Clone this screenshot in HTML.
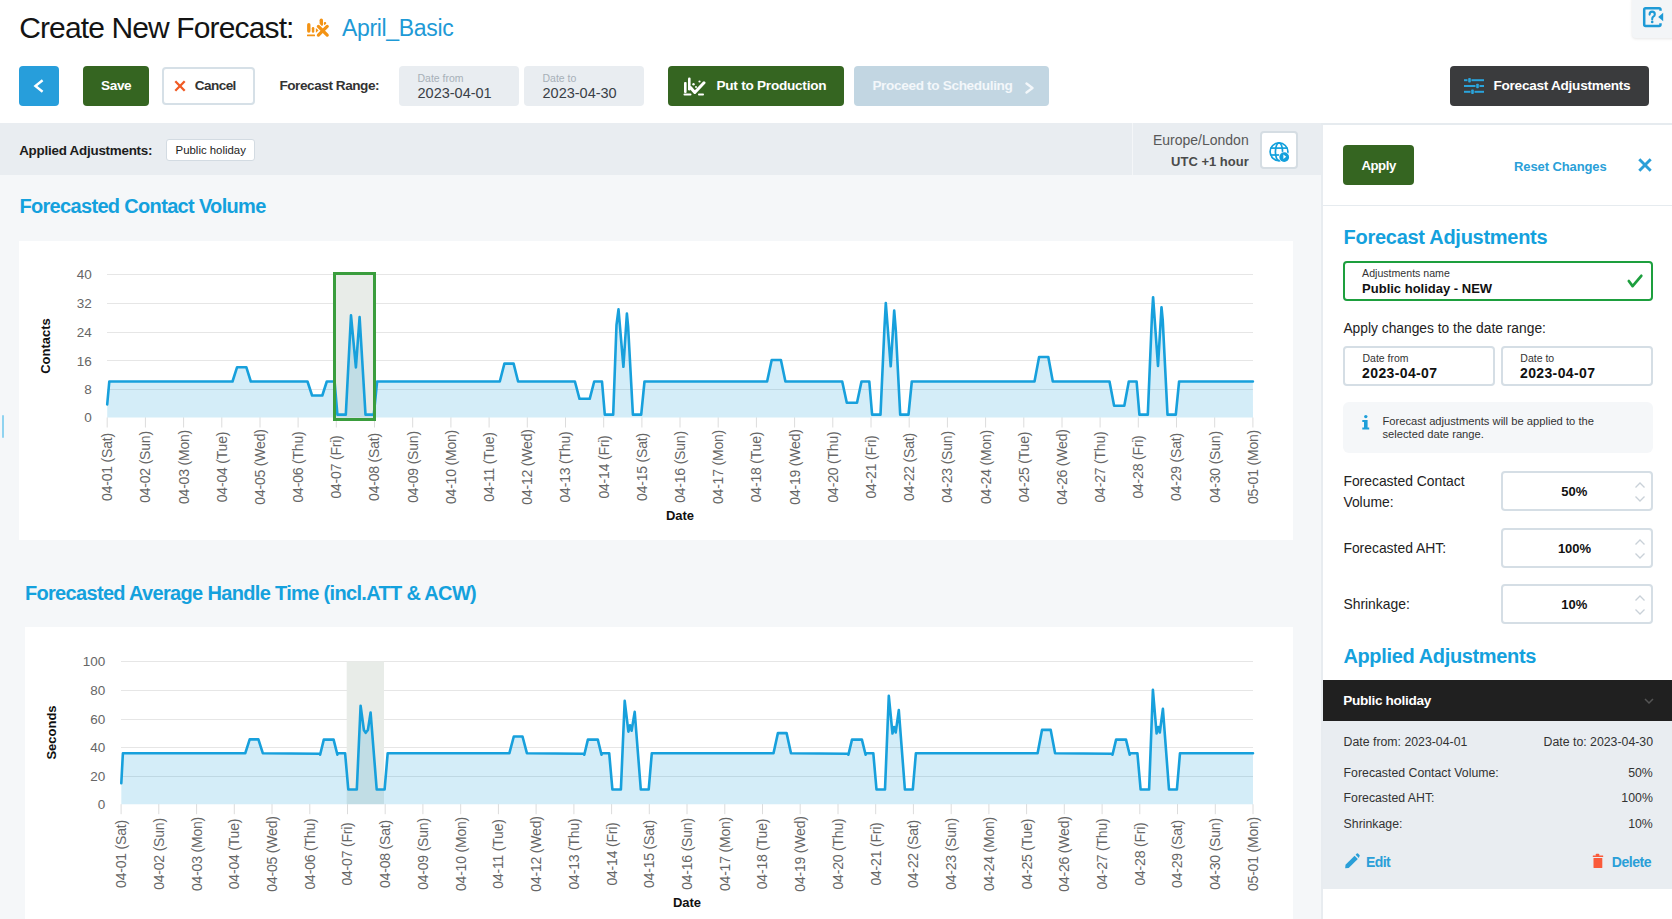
<!DOCTYPE html>
<html><head><meta charset="utf-8"><title>Create New Forecast</title>
<style>
html,body{margin:0;padding:0;}
body{width:1672px;height:919px;overflow:hidden;position:relative;background:#fff;font-family:"Liberation Sans", sans-serif;}
.t{position:absolute;white-space:nowrap;font-family:"Liberation Sans", sans-serif;}
.r{position:absolute;}
svg text{font-family:"Liberation Sans", sans-serif;}
</style></head><body>
<div class="t" style="top:12.50px;font-size:30px;line-height:30px;font-weight:400;color:#141414;letter-spacing:-0.87px;left:19.20px;">Create New Forecast:</div>
<svg class="r" style="left:302px;top:14px;width:32px;height:26px" viewBox="0 0 32 26">
<g fill="#f39314">
<rect x="5.1" y="9.1" width="3.4" height="9.6" rx="1.7"/>
<rect x="9.8" y="13" width="2.5" height="5.7" rx="1.2"/>
<polygon points="13.9,13.9 16.7,16.3 13.9,18.7"/>
<rect x="5" y="20.4" width="8" height="1.8" rx="0.5"/>
<rect x="17.6" y="4.5" width="3.4" height="7.6" rx="1.7"/>
<rect x="21.8" y="7.9" width="2.4" height="3" rx="1"/>
</g>
<g stroke="#fff" stroke-width="5.4" stroke-linecap="round">
<line x1="16.4" y1="12.4" x2="25.2" y2="21.1"/><line x1="25.2" y1="12.4" x2="16.4" y2="21.1"/>
</g>
<g stroke="#f39314" stroke-width="3.3" stroke-linecap="round">
<line x1="16.4" y1="12.4" x2="25.2" y2="21.1"/><line x1="25.2" y1="12.4" x2="16.4" y2="21.1"/>
</g>
</svg>
<div class="t" style="top:17.13px;font-size:23px;line-height:23px;font-weight:400;color:#1e9ad6;letter-spacing:-0.33px;left:342.00px;">April_Basic</div>
<div class="r" style="left:1632.00px;top:-4.00px;width:44.00px;height:42.00px;background:#f3f5f7;border-radius:4px;box-sizing:border-box;box-shadow:0 1px 3px rgba(0,0,0,0.10);"></div>
<svg class="r" style="left:1642px;top:6px;width:22px;height:22px" viewBox="0 0 22 22">
<path d="M18.5 4.8 V3.6 Q18.5 2.2 17.1 2.2 H3.6 Q2.2 2.2 2.2 3.6 V18.6 Q2.2 20 3.6 20 H17.1 Q18.5 20 18.5 18.6 V17.2" fill="none" stroke="#1e9ad6" stroke-width="2.5"/>
<path d="M21.2 6.8 L16.2 11 L21.2 15.2 Z" fill="#1e9ad6"/>
<path d="M7.6 8.6 Q7.6 5.6 10.2 5.6 Q12.8 5.6 12.8 8.2 Q12.8 9.8 11.3 10.7 Q10.2 11.4 10.2 13.2" fill="none" stroke="#1e9ad6" stroke-width="2.1" stroke-linecap="round"/>
<circle cx="10.2" cy="15.9" r="1.3" fill="#1e9ad6"/>
</svg>
<div class="r" style="left:19.00px;top:66.00px;width:40.00px;height:40.00px;background:#279edb;border-radius:4px;box-sizing:border-box;"></div>
<svg class="r" style="left:19px;top:66px;width:40px;height:40px" viewBox="0 0 40 40"><polyline points="23.6,14.2 16.4,20 23.6,25.8" fill="none" stroke="#fff" stroke-width="2.4" stroke-linecap="butt" stroke-linejoin="miter"/></svg>
<div class="r" style="left:83.00px;top:66.00px;width:66.00px;height:40.00px;background:#356521;border-radius:4px;box-sizing:border-box;"></div>
<div class="t" style="top:79.39px;font-size:13.6px;line-height:13.6px;font-weight:700;color:#fff;letter-spacing:-0.4px;left:101.10px;">Save</div>
<div class="r" style="left:161.50px;top:66.50px;width:93.00px;height:38.50px;background:#fff;border-radius:4px;box-sizing:border-box;border:2px solid #d6e0e7;"></div>
<svg class="r" style="left:174px;top:80px;width:12px;height:12px" viewBox="0 0 12 12"><g stroke="#f05a24" stroke-width="2.3" stroke-linecap="butt"><line x1="1.3" y1="1.3" x2="10.7" y2="10.7"/><line x1="10.7" y1="1.3" x2="1.3" y2="10.7"/></g></svg>
<div class="t" style="top:79.39px;font-size:13.6px;line-height:13.6px;font-weight:700;color:#333;letter-spacing:-0.6px;left:194.80px;">Cancel</div>
<div class="t" style="top:79.39px;font-size:13.6px;line-height:13.6px;font-weight:700;color:#333;letter-spacing:-0.45px;left:279.40px;">Forecast Range:</div>
<div class="r" style="left:399.00px;top:66.00px;width:120.00px;height:40.00px;background:#e9edf1;border-radius:4px;box-sizing:border-box;"></div>
<div class="t" style="top:72.71px;font-size:10.5px;line-height:10.5px;font-weight:400;color:#a7b0b8;left:417.50px;">Date from</div>
<div class="t" style="top:85.53px;font-size:14.5px;line-height:14.5px;font-weight:400;color:#3a4047;left:417.50px;">2023-04-01</div>
<div class="r" style="left:524.00px;top:66.00px;width:120.00px;height:40.00px;background:#e9edf1;border-radius:4px;box-sizing:border-box;"></div>
<div class="t" style="top:72.71px;font-size:10.5px;line-height:10.5px;font-weight:400;color:#a7b0b8;left:542.50px;">Date to</div>
<div class="t" style="top:85.53px;font-size:14.5px;line-height:14.5px;font-weight:400;color:#3a4047;left:542.50px;">2023-04-30</div>
<div class="r" style="left:668.00px;top:66.00px;width:175.50px;height:40.00px;background:#356521;border-radius:4px;box-sizing:border-box;"></div>
<svg class="r" style="left:683px;top:76px;width:23px;height:20px" viewBox="0 0 23 20">
<g fill="#fff">
<rect x="1" y="6" width="2.6" height="11" rx="1"/>
<rect x="5" y="1.5" width="2.6" height="13" rx="1.2"/>
<rect x="0.5" y="17.6" width="8" height="1.8" rx="0.9"/>
<rect x="15" y="17.6" width="6" height="1.8" rx="0.9"/>
<circle cx="10.5" cy="8.3" r="1.2"/><circle cx="16.5" cy="5.5" r="1.1"/><circle cx="13" cy="11" r="1"/>
</g>
<polyline points="7.5,11.5 11.8,16.5 21,6.8" fill="none" stroke="#fff" stroke-width="3" stroke-linecap="round" stroke-linejoin="round"/>
</svg>
<div class="t" style="top:79.49px;font-size:13.6px;line-height:13.6px;font-weight:700;color:#fff;letter-spacing:-0.25px;left:716.50px;">Put to Production</div>
<div class="r" style="left:854.00px;top:66.00px;width:195.00px;height:39.50px;background:#c2d6e2;border-radius:4px;box-sizing:border-box;"></div>
<div class="t" style="top:79.49px;font-size:13.6px;line-height:13.6px;font-weight:700;color:#f3f7fa;letter-spacing:-0.34px;left:872.40px;">Proceed to Scheduling</div>
<svg class="r" style="left:1024px;top:82px;width:12px;height:12px" viewBox="0 0 12 12"><polyline points="2.5,1.5 8.5,6 2.5,10.5" fill="none" stroke="#f3f7fa" stroke-width="2.3" stroke-linecap="round" stroke-linejoin="round"/></svg>
<div class="r" style="left:1450.00px;top:66.00px;width:199.00px;height:39.50px;background:#3a3b3d;border-radius:4px;box-sizing:border-box;"></div>
<svg class="r" style="left:1463px;top:77px;width:23px;height:19px" viewBox="0 0 23 19">
<g stroke="#2aa4dc" stroke-width="2" stroke-linecap="butt">
<line x1="1" y1="3.2" x2="4.5" y2="3.2"/><line x1="8.5" y1="3.2" x2="21" y2="3.2"/>
<line x1="1" y1="9" x2="12.5" y2="9"/><line x1="16.5" y1="9" x2="21" y2="9"/>
<line x1="1" y1="14.8" x2="7.5" y2="14.8"/><line x1="11.5" y1="14.8" x2="21" y2="14.8"/>
</g>
<g fill="#2aa4dc"><rect x="5.2" y="1" width="2.6" height="4.6" rx="0.8"/><rect x="13.2" y="6.7" width="2.6" height="4.6" rx="0.8"/><rect x="8.2" y="12.5" width="2.6" height="4.6" rx="0.8"/></g>
</svg>
<div class="t" style="top:79.49px;font-size:13.6px;line-height:13.6px;font-weight:700;color:#fff;letter-spacing:-0.27px;left:1493.50px;">Forecast Adjustments</div>
<div class="r" style="left:0.00px;top:175.00px;width:1321.00px;height:744.00px;background:#f5f7f9;border-radius:0px;box-sizing:border-box;"></div>
<div class="r" style="left:0.00px;top:123.00px;width:1322.00px;height:52.00px;background:#e9edf1;border-radius:0px;box-sizing:border-box;"></div>
<div class="r" style="left:1132.00px;top:123.00px;width:1.00px;height:52.00px;background:#f4f6f8;border-radius:0px;box-sizing:border-box;"></div>
<div class="t" style="top:143.96px;font-size:13.4px;line-height:13.4px;font-weight:700;color:#1c1c1c;letter-spacing:-0.24px;left:19.20px;">Applied Adjustments:</div>
<div class="r" style="left:166.00px;top:139.00px;width:89.00px;height:22.00px;background:#fff;border-radius:3px;box-sizing:border-box;border:1.5px solid #d3dbe2;"></div>
<div class="t" style="top:144.75px;font-size:11.4px;line-height:11.4px;font-weight:400;color:#222;left:175.60px;">Public holiday</div>
<div class="t" style="top:132.95px;font-size:14px;line-height:14px;font-weight:400;color:#585858;right:423.30px;">Europe/London</div>
<div class="t" style="top:154.50px;font-size:13px;line-height:13px;font-weight:700;color:#4a4a4a;right:423.30px;">UTC +1 hour</div>
<div class="r" style="left:1260.00px;top:131.00px;width:38.00px;height:38.00px;background:#fff;border-radius:4px;box-sizing:border-box;border:2px solid #d5dde3;"></div>
<svg class="r" style="left:1268px;top:141px;width:23px;height:23px" viewBox="0 0 23 23">
<g fill="none" stroke="#12a0dc" stroke-width="1.7">
<circle cx="11" cy="10.8" r="8.9"/>
<ellipse cx="11" cy="10.8" rx="3.6" ry="8.9"/>
<line x1="2.5" y1="7.1" x2="19.5" y2="7.1"/>
<line x1="2.5" y1="14" x2="11.5" y2="14"/>
</g>
<circle cx="16.2" cy="16.1" r="5.6" fill="#fff"/>
<circle cx="16.2" cy="16.1" r="4.9" fill="#12a0dc"/>
<path d="M15.4 13.6 L18.2 15.8 L15.4 17.9 Z" fill="#fff"/>
</svg>
<div class="t" style="top:196.17px;font-size:20px;line-height:20px;font-weight:700;color:#14a1dd;letter-spacing:-0.67px;left:19.40px;">Forecasted Contact Volume</div>
<div class="r" style="left:19.00px;top:241.00px;width:1274.00px;height:299.00px;background:#fff;border-radius:0px;box-sizing:border-box;"></div>
<div class="r" style="left:2.00px;top:415.00px;width:2.00px;height:23.00px;background:#8fd3f0;border-radius:1px;box-sizing:border-box;"></div>
<div class="t" style="top:583.37px;font-size:20px;line-height:20px;font-weight:700;color:#14a1dd;letter-spacing:-0.67px;left:24.90px;">Forecasted Average Handle Time (incl.ATT &amp; ACW)</div>
<div class="r" style="left:25.00px;top:627.00px;width:1268.00px;height:292.00px;background:#fff;border-radius:0px;box-sizing:border-box;"></div>
<svg class="r" style="left:0;top:0;width:1321px;height:919px" viewBox="0 0 1321 919">
<g stroke="#e6e6e6" stroke-width="1">
<line x1="107" y1="274.5" x2="1253" y2="274.5"/><line x1="107" y1="303.5" x2="1253" y2="303.5"/><line x1="107" y1="332.5" x2="1253" y2="332.5"/><line x1="107" y1="360.5" x2="1253" y2="360.5"/><line x1="107" y1="389.5" x2="1253" y2="389.5"/>
<line x1="121" y1="661.5" x2="1253" y2="661.5"/><line x1="121" y1="690.5" x2="1253" y2="690.5"/><line x1="121" y1="719.5" x2="1253" y2="719.5"/><line x1="121" y1="747.5" x2="1253" y2="747.5"/><line x1="121" y1="776.5" x2="1253" y2="776.5"/>
</g>
<g stroke="#dcdcdc" stroke-width="1"><line x1="107.2" y1="417.5" x2="107.2" y2="427.5"/><line x1="145.4" y1="417.5" x2="145.4" y2="427.5"/><line x1="183.6" y1="417.5" x2="183.6" y2="427.5"/><line x1="221.8" y1="417.5" x2="221.8" y2="427.5"/><line x1="260.0" y1="417.5" x2="260.0" y2="427.5"/><line x1="298.1" y1="417.5" x2="298.1" y2="427.5"/><line x1="336.3" y1="417.5" x2="336.3" y2="427.5"/><line x1="374.5" y1="417.5" x2="374.5" y2="427.5"/><line x1="412.7" y1="417.5" x2="412.7" y2="427.5"/><line x1="450.9" y1="417.5" x2="450.9" y2="427.5"/><line x1="489.1" y1="417.5" x2="489.1" y2="427.5"/><line x1="527.3" y1="417.5" x2="527.3" y2="427.5"/><line x1="565.5" y1="417.5" x2="565.5" y2="427.5"/><line x1="603.7" y1="417.5" x2="603.7" y2="427.5"/><line x1="641.9" y1="417.5" x2="641.9" y2="427.5"/><line x1="680.0" y1="417.5" x2="680.0" y2="427.5"/><line x1="718.2" y1="417.5" x2="718.2" y2="427.5"/><line x1="756.4" y1="417.5" x2="756.4" y2="427.5"/><line x1="794.6" y1="417.5" x2="794.6" y2="427.5"/><line x1="832.8" y1="417.5" x2="832.8" y2="427.5"/><line x1="871.0" y1="417.5" x2="871.0" y2="427.5"/><line x1="909.2" y1="417.5" x2="909.2" y2="427.5"/><line x1="947.4" y1="417.5" x2="947.4" y2="427.5"/><line x1="985.6" y1="417.5" x2="985.6" y2="427.5"/><line x1="1023.8" y1="417.5" x2="1023.8" y2="427.5"/><line x1="1062.0" y1="417.5" x2="1062.0" y2="427.5"/><line x1="1100.1" y1="417.5" x2="1100.1" y2="427.5"/><line x1="1138.3" y1="417.5" x2="1138.3" y2="427.5"/><line x1="1176.5" y1="417.5" x2="1176.5" y2="427.5"/><line x1="1214.7" y1="417.5" x2="1214.7" y2="427.5"/><line x1="1252.9" y1="417.5" x2="1252.9" y2="427.5"/><line x1="121.1" y1="804.2" x2="121.1" y2="814.2"/><line x1="158.8" y1="804.2" x2="158.8" y2="814.2"/><line x1="196.6" y1="804.2" x2="196.6" y2="814.2"/><line x1="234.3" y1="804.2" x2="234.3" y2="814.2"/><line x1="272.0" y1="804.2" x2="272.0" y2="814.2"/><line x1="309.8" y1="804.2" x2="309.8" y2="814.2"/><line x1="347.5" y1="804.2" x2="347.5" y2="814.2"/><line x1="385.2" y1="804.2" x2="385.2" y2="814.2"/><line x1="422.9" y1="804.2" x2="422.9" y2="814.2"/><line x1="460.7" y1="804.2" x2="460.7" y2="814.2"/><line x1="498.4" y1="804.2" x2="498.4" y2="814.2"/><line x1="536.1" y1="804.2" x2="536.1" y2="814.2"/><line x1="573.9" y1="804.2" x2="573.9" y2="814.2"/><line x1="611.6" y1="804.2" x2="611.6" y2="814.2"/><line x1="649.3" y1="804.2" x2="649.3" y2="814.2"/><line x1="687.0" y1="804.2" x2="687.0" y2="814.2"/><line x1="724.8" y1="804.2" x2="724.8" y2="814.2"/><line x1="762.5" y1="804.2" x2="762.5" y2="814.2"/><line x1="800.2" y1="804.2" x2="800.2" y2="814.2"/><line x1="838.0" y1="804.2" x2="838.0" y2="814.2"/><line x1="875.7" y1="804.2" x2="875.7" y2="814.2"/><line x1="913.4" y1="804.2" x2="913.4" y2="814.2"/><line x1="951.2" y1="804.2" x2="951.2" y2="814.2"/><line x1="988.9" y1="804.2" x2="988.9" y2="814.2"/><line x1="1026.6" y1="804.2" x2="1026.6" y2="814.2"/><line x1="1064.3" y1="804.2" x2="1064.3" y2="814.2"/><line x1="1102.1" y1="804.2" x2="1102.1" y2="814.2"/><line x1="1139.8" y1="804.2" x2="1139.8" y2="814.2"/><line x1="1177.5" y1="804.2" x2="1177.5" y2="814.2"/><line x1="1215.3" y1="804.2" x2="1215.3" y2="814.2"/><line x1="1253.0" y1="804.2" x2="1253.0" y2="814.2"/></g>
<rect x="334.5" y="273.5" width="40" height="146" fill="#e8ece8"/>
<rect x="346.7" y="661.5" width="37.3" height="142.7" fill="#e8ece8"/>
<polygon points="107.2,404.5 109.3,381.5 232.5,381.5 237.1,367.2 246.3,367.2 250.8,381.5 307.5,381.5 312.1,395.5 322.3,395.5 326.8,381.5 334.6,381.5 337.4,414.6 345.8,414.6 351.0,315.3 355.9,367.4 359.6,317.0 365.5,414.6 373.8,414.6 377.1,381.5 499.8,381.5 504.4,363.6 513.6,363.6 518.1,381.5 574.9,381.5 579.5,398.8 589.7,398.8 594.2,381.5 602.0,381.5 604.8,414.6 613.2,414.6 616.5,324.9 618.5,309.4 623.4,366.8 626.9,313.5 628.1,326.3 632.9,414.6 641.2,414.6 644.5,381.5 767.1,381.5 771.7,360.0 780.9,360.0 785.4,381.5 842.2,381.5 846.8,402.7 857.0,402.7 861.5,381.5 869.3,381.5 872.1,414.6 880.5,414.6 884.4,328.8 885.8,303.1 890.7,366.3 894.2,310.6 895.8,330.3 900.2,414.6 908.5,414.6 911.8,381.5 1034.5,381.5 1039.1,357.0 1048.3,357.0 1052.8,381.5 1109.5,381.5 1114.1,405.8 1124.3,405.8 1128.8,381.5 1136.6,381.5 1139.4,414.6 1147.8,414.6 1152.0,315.0 1153.1,297.2 1158.0,366.0 1161.5,307.2 1162.7,319.6 1167.5,414.6 1175.8,414.6 1179.1,381.5 1252.9,381.5 1253,417.5 107.2,417.5" fill="rgba(28,160,220,0.19)"/>
<polygon points="121.3,783.2 122.9,753.2 245.3,753.2 249.7,739.4 258.4,739.4 262.8,753.2 319.8,753.7 320.1,754.7 323.8,739.6 333.6,739.6 337.4,754.7 337.9,753.2 345.1,753.2 348.3,789.5 356.8,789.5 360.6,705.7 363.9,730.0 365.7,732.8 367.9,730.0 370.6,712.5 376.7,789.5 384.6,789.5 387.7,753.2 509.4,753.2 513.8,736.5 522.5,736.5 526.9,753.2 583.9,753.7 584.3,754.7 587.9,739.6 597.8,739.6 601.5,754.7 602.1,753.2 609.2,753.2 612.4,789.5 620.9,789.5 624.7,700.8 628.4,731.7 630.0,725.2 631.6,730.7 634.7,711.9 640.8,789.5 648.7,789.5 651.8,753.2 773.5,753.2 777.9,733.1 786.6,733.1 791.0,753.2 848.0,753.7 848.4,754.7 852.0,739.6 861.9,739.6 865.6,754.7 866.2,753.2 873.3,753.2 876.5,789.5 885.0,789.5 888.8,695.8 892.5,733.5 894.1,727.0 895.7,732.5 898.8,710.1 904.9,789.5 912.8,789.5 915.9,753.2 1037.6,753.2 1042.0,729.9 1050.7,729.9 1055.1,753.2 1112.1,753.7 1112.5,754.7 1116.1,739.6 1126.0,739.6 1129.7,754.7 1130.3,753.2 1137.4,753.2 1140.6,789.5 1149.1,789.5 1152.9,689.9 1156.6,733.5 1158.2,727.0 1159.8,732.5 1162.9,708.9 1169.0,789.5 1176.9,789.5 1180.0,753.2 1253.0,753.2 1253,804.2 121.3,804.2" fill="rgba(28,160,220,0.19)"/>
<polyline points="107.2,404.5 109.3,381.5 232.5,381.5 237.1,367.2 246.3,367.2 250.8,381.5 307.5,381.5 312.1,395.5 322.3,395.5 326.8,381.5 334.6,381.5 337.4,414.6 345.8,414.6 351.0,315.3 355.9,367.4 359.6,317.0 365.5,414.6 373.8,414.6 377.1,381.5 499.8,381.5 504.4,363.6 513.6,363.6 518.1,381.5 574.9,381.5 579.5,398.8 589.7,398.8 594.2,381.5 602.0,381.5 604.8,414.6 613.2,414.6 616.5,324.9 618.5,309.4 623.4,366.8 626.9,313.5 628.1,326.3 632.9,414.6 641.2,414.6 644.5,381.5 767.1,381.5 771.7,360.0 780.9,360.0 785.4,381.5 842.2,381.5 846.8,402.7 857.0,402.7 861.5,381.5 869.3,381.5 872.1,414.6 880.5,414.6 884.4,328.8 885.8,303.1 890.7,366.3 894.2,310.6 895.8,330.3 900.2,414.6 908.5,414.6 911.8,381.5 1034.5,381.5 1039.1,357.0 1048.3,357.0 1052.8,381.5 1109.5,381.5 1114.1,405.8 1124.3,405.8 1128.8,381.5 1136.6,381.5 1139.4,414.6 1147.8,414.6 1152.0,315.0 1153.1,297.2 1158.0,366.0 1161.5,307.2 1162.7,319.6 1167.5,414.6 1175.8,414.6 1179.1,381.5 1252.9,381.5" fill="none" stroke="#17a0dc" stroke-width="2.6" stroke-linejoin="round" stroke-linecap="round"/>
<polyline points="121.3,783.2 122.9,753.2 245.3,753.2 249.7,739.4 258.4,739.4 262.8,753.2 319.8,753.7 320.1,754.7 323.8,739.6 333.6,739.6 337.4,754.7 337.9,753.2 345.1,753.2 348.3,789.5 356.8,789.5 360.6,705.7 363.9,730.0 365.7,732.8 367.9,730.0 370.6,712.5 376.7,789.5 384.6,789.5 387.7,753.2 509.4,753.2 513.8,736.5 522.5,736.5 526.9,753.2 583.9,753.7 584.3,754.7 587.9,739.6 597.8,739.6 601.5,754.7 602.1,753.2 609.2,753.2 612.4,789.5 620.9,789.5 624.7,700.8 628.4,731.7 630.0,725.2 631.6,730.7 634.7,711.9 640.8,789.5 648.7,789.5 651.8,753.2 773.5,753.2 777.9,733.1 786.6,733.1 791.0,753.2 848.0,753.7 848.4,754.7 852.0,739.6 861.9,739.6 865.6,754.7 866.2,753.2 873.3,753.2 876.5,789.5 885.0,789.5 888.8,695.8 892.5,733.5 894.1,727.0 895.7,732.5 898.8,710.1 904.9,789.5 912.8,789.5 915.9,753.2 1037.6,753.2 1042.0,729.9 1050.7,729.9 1055.1,753.2 1112.1,753.7 1112.5,754.7 1116.1,739.6 1126.0,739.6 1129.7,754.7 1130.3,753.2 1137.4,753.2 1140.6,789.5 1149.1,789.5 1152.9,689.9 1156.6,733.5 1158.2,727.0 1159.8,732.5 1162.9,708.9 1169.0,789.5 1176.9,789.5 1180.0,753.2 1253.0,753.2" fill="none" stroke="#17a0dc" stroke-width="2.6" stroke-linejoin="round" stroke-linecap="round"/>
<rect x="334.5" y="273.5" width="40" height="146" fill="none" stroke="#3a9d3d" stroke-width="3"/>
<g font-family="Liberation Sans" font-size="13.5" fill="#666" text-anchor="end">
<text x="91.7" y="279.4">40</text><text x="91.7" y="308.2">32</text><text x="91.7" y="337.0">24</text><text x="91.7" y="365.5">16</text><text x="91.7" y="394.09999999999997">8</text><text x="91.7" y="422.2">0</text><text x="105.3" y="666.3">100</text><text x="105.3" y="695.3">80</text><text x="105.3" y="724.1999999999999">60</text><text x="105.3" y="752.4">40</text><text x="105.3" y="781.3">20</text><text x="105.3" y="809.1">0</text>
</g>
<g font-family="Liberation Sans" font-size="14" letter-spacing="-0.2" fill="#666">
<text transform="translate(112.1,467.0) rotate(-90)" text-anchor="middle">04-01 (Sat)</text><text transform="translate(150.3,467.0) rotate(-90)" text-anchor="middle">04-02 (Sun)</text><text transform="translate(188.5,467.0) rotate(-90)" text-anchor="middle">04-03 (Mon)</text><text transform="translate(226.7,467.0) rotate(-90)" text-anchor="middle">04-04 (Tue)</text><text transform="translate(264.9,467.0) rotate(-90)" text-anchor="middle">04-05 (Wed)</text><text transform="translate(303.0,467.0) rotate(-90)" text-anchor="middle">04-06 (Thu)</text><text transform="translate(341.2,467.0) rotate(-90)" text-anchor="middle">04-07 (Fri)</text><text transform="translate(379.4,467.0) rotate(-90)" text-anchor="middle">04-08 (Sat)</text><text transform="translate(417.6,467.0) rotate(-90)" text-anchor="middle">04-09 (Sun)</text><text transform="translate(455.8,467.0) rotate(-90)" text-anchor="middle">04-10 (Mon)</text><text transform="translate(494.0,467.0) rotate(-90)" text-anchor="middle">04-11 (Tue)</text><text transform="translate(532.2,467.0) rotate(-90)" text-anchor="middle">04-12 (Wed)</text><text transform="translate(570.4,467.0) rotate(-90)" text-anchor="middle">04-13 (Thu)</text><text transform="translate(608.6,467.0) rotate(-90)" text-anchor="middle">04-14 (Fri)</text><text transform="translate(646.8,467.0) rotate(-90)" text-anchor="middle">04-15 (Sat)</text><text transform="translate(684.9,467.0) rotate(-90)" text-anchor="middle">04-16 (Sun)</text><text transform="translate(723.1,467.0) rotate(-90)" text-anchor="middle">04-17 (Mon)</text><text transform="translate(761.3,467.0) rotate(-90)" text-anchor="middle">04-18 (Tue)</text><text transform="translate(799.5,467.0) rotate(-90)" text-anchor="middle">04-19 (Wed)</text><text transform="translate(837.7,467.0) rotate(-90)" text-anchor="middle">04-20 (Thu)</text><text transform="translate(875.9,467.0) rotate(-90)" text-anchor="middle">04-21 (Fri)</text><text transform="translate(914.1,467.0) rotate(-90)" text-anchor="middle">04-22 (Sat)</text><text transform="translate(952.3,467.0) rotate(-90)" text-anchor="middle">04-23 (Sun)</text><text transform="translate(990.5,467.0) rotate(-90)" text-anchor="middle">04-24 (Mon)</text><text transform="translate(1028.7,467.0) rotate(-90)" text-anchor="middle">04-25 (Tue)</text><text transform="translate(1066.9,467.0) rotate(-90)" text-anchor="middle">04-26 (Wed)</text><text transform="translate(1105.0,467.0) rotate(-90)" text-anchor="middle">04-27 (Thu)</text><text transform="translate(1143.2,467.0) rotate(-90)" text-anchor="middle">04-28 (Fri)</text><text transform="translate(1181.4,467.0) rotate(-90)" text-anchor="middle">04-29 (Sat)</text><text transform="translate(1219.6,467.0) rotate(-90)" text-anchor="middle">04-30 (Sun)</text><text transform="translate(1257.8,467.0) rotate(-90)" text-anchor="middle">05-01 (Mon)</text>
<text transform="translate(126.0,854.0) rotate(-90)" text-anchor="middle">04-01 (Sat)</text><text transform="translate(163.7,854.0) rotate(-90)" text-anchor="middle">04-02 (Sun)</text><text transform="translate(201.5,854.0) rotate(-90)" text-anchor="middle">04-03 (Mon)</text><text transform="translate(239.2,854.0) rotate(-90)" text-anchor="middle">04-04 (Tue)</text><text transform="translate(276.9,854.0) rotate(-90)" text-anchor="middle">04-05 (Wed)</text><text transform="translate(314.6,854.0) rotate(-90)" text-anchor="middle">04-06 (Thu)</text><text transform="translate(352.4,854.0) rotate(-90)" text-anchor="middle">04-07 (Fri)</text><text transform="translate(390.1,854.0) rotate(-90)" text-anchor="middle">04-08 (Sat)</text><text transform="translate(427.8,854.0) rotate(-90)" text-anchor="middle">04-09 (Sun)</text><text transform="translate(465.6,854.0) rotate(-90)" text-anchor="middle">04-10 (Mon)</text><text transform="translate(503.3,854.0) rotate(-90)" text-anchor="middle">04-11 (Tue)</text><text transform="translate(541.0,854.0) rotate(-90)" text-anchor="middle">04-12 (Wed)</text><text transform="translate(578.8,854.0) rotate(-90)" text-anchor="middle">04-13 (Thu)</text><text transform="translate(616.5,854.0) rotate(-90)" text-anchor="middle">04-14 (Fri)</text><text transform="translate(654.2,854.0) rotate(-90)" text-anchor="middle">04-15 (Sat)</text><text transform="translate(691.9,854.0) rotate(-90)" text-anchor="middle">04-16 (Sun)</text><text transform="translate(729.7,854.0) rotate(-90)" text-anchor="middle">04-17 (Mon)</text><text transform="translate(767.4,854.0) rotate(-90)" text-anchor="middle">04-18 (Tue)</text><text transform="translate(805.1,854.0) rotate(-90)" text-anchor="middle">04-19 (Wed)</text><text transform="translate(842.9,854.0) rotate(-90)" text-anchor="middle">04-20 (Thu)</text><text transform="translate(880.6,854.0) rotate(-90)" text-anchor="middle">04-21 (Fri)</text><text transform="translate(918.3,854.0) rotate(-90)" text-anchor="middle">04-22 (Sat)</text><text transform="translate(956.1,854.0) rotate(-90)" text-anchor="middle">04-23 (Sun)</text><text transform="translate(993.8,854.0) rotate(-90)" text-anchor="middle">04-24 (Mon)</text><text transform="translate(1031.5,854.0) rotate(-90)" text-anchor="middle">04-25 (Tue)</text><text transform="translate(1069.2,854.0) rotate(-90)" text-anchor="middle">04-26 (Wed)</text><text transform="translate(1107.0,854.0) rotate(-90)" text-anchor="middle">04-27 (Thu)</text><text transform="translate(1144.7,854.0) rotate(-90)" text-anchor="middle">04-28 (Fri)</text><text transform="translate(1182.4,854.0) rotate(-90)" text-anchor="middle">04-29 (Sat)</text><text transform="translate(1220.2,854.0) rotate(-90)" text-anchor="middle">04-30 (Sun)</text><text transform="translate(1257.9,854.0) rotate(-90)" text-anchor="middle">05-01 (Mon)</text>
</g>
<g font-family="Liberation Sans" font-size="13" font-weight="700" fill="#111" text-anchor="middle">
<text transform="translate(50.3,346) rotate(-90)">Contacts</text>
<text transform="translate(56,732.5) rotate(-90)">Seconds</text>
<text x="680" y="519.6">Date</text>
<text x="687" y="906.5">Date</text>
</g>
</svg>
<div class="r" style="left:1321.00px;top:123.00px;width:351.00px;height:796.00px;background:#fff;border-radius:0px;box-sizing:border-box;"></div>
<div class="r" style="left:1320.50px;top:123.00px;width:2.50px;height:796.00px;background:#e8ecf0;border-radius:0px;box-sizing:border-box;"></div>
<div class="r" style="left:1321.00px;top:123.00px;width:351.00px;height:2.00px;background:#e6ebef;border-radius:0px;box-sizing:border-box;"></div>
<div class="r" style="left:1343.20px;top:145.30px;width:70.80px;height:39.30px;background:#356521;border-radius:4px;box-sizing:border-box;"></div>
<div class="t" style="top:159.43px;font-size:13.2px;line-height:13.2px;font-weight:700;color:#fff;letter-spacing:-0.45px;left:1361.40px;">Apply</div>
<div class="t" style="top:159.50px;font-size:13px;line-height:13px;font-weight:700;color:#2a9fd8;letter-spacing:-0.1px;left:1514.00px;">Reset Changes</div>
<svg class="r" style="left:1637px;top:157px;width:16px;height:16px" viewBox="0 0 16 16"><g stroke="#2a9fd8" stroke-width="2.9" stroke-linecap="butt"><line x1="2.3" y1="2.3" x2="13.7" y2="13.7"/><line x1="13.7" y1="2.3" x2="2.3" y2="13.7"/></g></svg>
<div class="r" style="left:1323.00px;top:205.00px;width:349.00px;height:1.00px;background:#e6ebef;border-radius:0px;box-sizing:border-box;"></div>
<div class="t" style="top:226.57px;font-size:20px;line-height:20px;font-weight:700;color:#14a1dd;letter-spacing:-0.28px;left:1343.60px;">Forecast Adjustments</div>
<div class="r" style="left:1343.00px;top:261.00px;width:310.00px;height:39.50px;background:#fff;border-radius:4px;box-sizing:border-box;border:2px solid #1d9f3e;"></div>
<div class="t" style="top:268.03px;font-size:10.6px;line-height:10.6px;font-weight:400;color:#333;left:1362.10px;">Adjustments name</div>
<div class="t" style="top:281.70px;font-size:13px;line-height:13px;font-weight:700;color:#111;left:1362.10px;">Public holiday - NEW</div>
<svg class="r" style="left:1626px;top:273px;width:18px;height:16px" viewBox="0 0 18 16"><polyline points="2.8,8 6.6,13.1 15.3,2.8" fill="none" stroke="#1d9f3e" stroke-width="2.7" stroke-linecap="round" stroke-linejoin="round"/></svg>
<div class="t" style="top:321.72px;font-size:13.8px;line-height:13.8px;font-weight:400;color:#222;left:1343.40px;">Apply changes to the date range:</div>
<div class="r" style="left:1343.00px;top:346.00px;width:152.00px;height:40.00px;background:#fff;border-radius:4px;box-sizing:border-box;border:2px solid #d5dee5;"></div>
<div class="t" style="top:352.71px;font-size:10.5px;line-height:10.5px;font-weight:400;color:#333;left:1362.50px;">Date from</div>
<div class="t" style="top:365.85px;font-size:14px;line-height:14px;font-weight:700;color:#111;letter-spacing:0.37px;left:1362.10px;">2023-04-07</div>
<div class="r" style="left:1501.00px;top:346.00px;width:152.00px;height:40.00px;background:#fff;border-radius:4px;box-sizing:border-box;border:2px solid #d5dee5;"></div>
<div class="t" style="top:352.71px;font-size:10.5px;line-height:10.5px;font-weight:400;color:#333;left:1520.30px;">Date to</div>
<div class="t" style="top:365.85px;font-size:14px;line-height:14px;font-weight:700;color:#111;letter-spacing:0.37px;left:1520.00px;">2023-04-07</div>
<div class="r" style="left:1343.00px;top:401.50px;width:310.00px;height:51.00px;background:#f5f7f9;border-radius:6px;box-sizing:border-box;"></div>
<svg class="r" style="left:1359.5px;top:414px;width:12.0px;height:17px" viewBox="0 0 12.0 17"><g fill="#1e9fd9"><circle cx="5.8" cy="2.6" r="1.7"/><path d="M2.3 6 H7.6 V13.6 H9.2 V15.6 H2.3 V13.6 H4 V8 H2.3 Z"/></g></svg>
<div class="t" style="top:415.82px;font-size:11.2px;line-height:11.2px;font-weight:400;color:#333;left:1382.50px;">Forecast adjustments will be applied to the</div>
<div class="t" style="top:428.62px;font-size:11.2px;line-height:11.2px;font-weight:400;color:#333;left:1382.50px;">selected date range.</div>
<div class="t" style="top:474.93px;font-size:13.9px;line-height:13.9px;font-weight:400;color:#222;left:1343.40px;">Forecasted Contact</div>
<div class="t" style="top:496.23px;font-size:13.9px;line-height:13.9px;font-weight:400;color:#222;left:1343.40px;">Volume:</div>
<div class="r" style="left:1501.00px;top:471.00px;width:152.00px;height:39.50px;background:#fff;border-radius:4px;box-sizing:border-box;border:2px solid #d5dee5;"></div>
<div class="t" style="top:485.20px;font-size:13px;line-height:13px;font-weight:700;color:#111;left:1274.30px;width:600px;text-align:center;">50%</div>
<svg class="r" style="left:1634px;top:481px;width:12px;height:22px" viewBox="0 0 12 22"><g fill="none" stroke="#c9d1d8" stroke-width="1.3"><polyline points="1.5,6.5 6,2 10.5,6.5"/><polyline points="1.5,15.5 6,20 10.5,15.5"/></g></svg>
<div class="t" style="top:541.93px;font-size:13.9px;line-height:13.9px;font-weight:400;color:#222;left:1343.40px;">Forecasted AHT:</div>
<div class="r" style="left:1501.00px;top:528.00px;width:152.00px;height:39.50px;background:#fff;border-radius:4px;box-sizing:border-box;border:2px solid #d5dee5;"></div>
<div class="t" style="top:541.90px;font-size:13px;line-height:13px;font-weight:700;color:#111;left:1274.50px;width:600px;text-align:center;">100%</div>
<svg class="r" style="left:1634px;top:538px;width:12px;height:22px" viewBox="0 0 12 22"><g fill="none" stroke="#c9d1d8" stroke-width="1.3"><polyline points="1.5,6.5 6,2 10.5,6.5"/><polyline points="1.5,15.5 6,20 10.5,15.5"/></g></svg>
<div class="t" style="top:597.63px;font-size:13.9px;line-height:13.9px;font-weight:400;color:#222;left:1343.40px;">Shrinkage:</div>
<div class="r" style="left:1501.00px;top:584.00px;width:152.00px;height:39.50px;background:#fff;border-radius:4px;box-sizing:border-box;border:2px solid #d5dee5;"></div>
<div class="t" style="top:597.80px;font-size:13px;line-height:13px;font-weight:700;color:#111;left:1274.30px;width:600px;text-align:center;">10%</div>
<svg class="r" style="left:1634px;top:594px;width:12px;height:22px" viewBox="0 0 12 22"><g fill="none" stroke="#c9d1d8" stroke-width="1.3"><polyline points="1.5,6.5 6,2 10.5,6.5"/><polyline points="1.5,15.5 6,20 10.5,15.5"/></g></svg>
<div class="t" style="top:645.77px;font-size:20px;line-height:20px;font-weight:700;color:#14a1dd;letter-spacing:-0.35px;left:1343.40px;">Applied Adjustments</div>
<div class="r" style="left:1323.00px;top:680.00px;width:349.00px;height:40.60px;background:#202020;border-radius:0px;box-sizing:border-box;"></div>
<div class="t" style="top:694.49px;font-size:13.6px;line-height:13.6px;font-weight:700;color:#fff;letter-spacing:-0.32px;left:1343.30px;">Public holiday</div>
<svg class="r" style="left:1643px;top:696px;width:12px;height:11px" viewBox="0 0 12 11"><polyline points="2,3 6,7 10,3" fill="none" stroke="#555" stroke-width="1.5"/></svg>
<div class="r" style="left:1323.00px;top:720.60px;width:349.00px;height:168.90px;background:#e9edf1;border-radius:0px;box-sizing:border-box;"></div>
<div class="t" style="top:736.29px;font-size:12.3px;line-height:12.3px;font-weight:400;color:#333;left:1343.60px;">Date from: 2023-04-01</div>
<div class="t" style="top:736.29px;font-size:12.3px;line-height:12.3px;font-weight:400;color:#333;right:19.00px;">Date to: 2023-04-30</div>
<div class="t" style="top:766.59px;font-size:12.3px;line-height:12.3px;font-weight:400;color:#333;left:1343.60px;">Forecasted Contact Volume:</div>
<div class="t" style="top:766.59px;font-size:12.3px;line-height:12.3px;font-weight:400;color:#333;right:19.20px;">50%</div>
<div class="t" style="top:792.39px;font-size:12.3px;line-height:12.3px;font-weight:400;color:#333;left:1343.60px;">Forecasted AHT:</div>
<div class="t" style="top:792.39px;font-size:12.3px;line-height:12.3px;font-weight:400;color:#333;right:19.20px;">100%</div>
<div class="t" style="top:818.09px;font-size:12.3px;line-height:12.3px;font-weight:400;color:#333;left:1343.60px;">Shrinkage:</div>
<div class="t" style="top:818.09px;font-size:12.3px;line-height:12.3px;font-weight:400;color:#333;right:19.20px;">10%</div>
<svg class="r" style="left:1344px;top:853px;width:17px;height:16px" viewBox="0 0 17 16"><g fill="#2a9fd8"><path d="M1.5 11.8 L10.6 2.7 L13.8 5.9 L4.7 15 L1.2 15.3 Z"/><path d="M11.6 1.7 L12.8 0.5 Q13.4 0 14 0.5 L15.5 2 Q16 2.6 15.5 3.2 L14.8 4.9 Z"/></g></svg>
<div class="t" style="top:855.45px;font-size:14px;line-height:14px;font-weight:700;color:#2a9fd8;letter-spacing:-0.6px;left:1366.00px;">Edit</div>
<svg class="r" style="left:1591px;top:853px;width:14px;height:16px" viewBox="0 0 14 16"><g fill="#fa5a3a"><rect x="1.8" y="2.4" width="10.4" height="1.7" rx="0.4"/><rect x="4.6" y="0.8" width="3.8" height="2.2" rx="1"/><rect x="2.5" y="5" width="8.8" height="9.9" rx="0.3"/></g></svg>
<div class="t" style="top:855.45px;font-size:14px;line-height:14px;font-weight:700;color:#2a9fd8;letter-spacing:-0.45px;left:1611.80px;">Delete</div>

</body></html>
